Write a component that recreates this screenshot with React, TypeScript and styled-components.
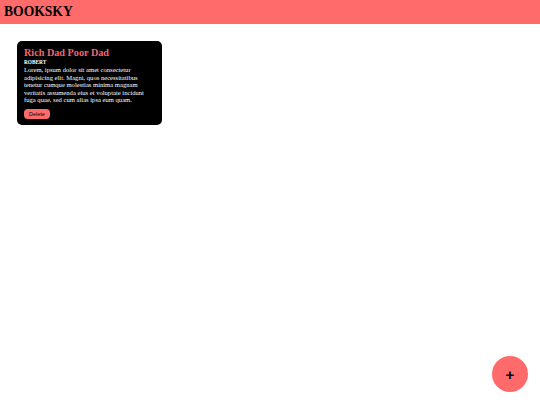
import React from "react";
import styled, { createGlobalStyle } from "styled-components";

const GlobalStyle = createGlobalStyle`
  body {
    margin: 0;
    background: #fff;
    font-family: "Liberation Serif", serif;
  }
`;

type Book = { title: string; author: string; description: string };

const books: Book[] = [
  {
    title: "Rich Dad Poor Dad",
    author: "Robert",
    description:
      "Lorem, ipsum dolor sit amet consectetur adipisicing elit. Magni, quos necessitatibus tenetur cumque molestias minima magnam veritatis assumenda eius et voluptate incidunt fuga quae, sed cum alias ipsa eum quam.",
  },
];

export default function App() {
  return (
    <>
      <GlobalStyle />
      <Header>
        <Logo>BOOKSKY</Logo>
      </Header>
      <Grid>
        {books.map((b) => (
          <Card key={b.title}>
            <Title>{b.title}</Title>
            <Author>{b.author}</Author>
            <Desc>{b.description}</Desc>
            <DeleteButton>Delete</DeleteButton>
          </Card>
        ))}
      </Grid>
      <Fab aria-label="add">+</Fab>
    </>
  );
}

const Header = styled.header`
  height: 24px;
  background: #ff6b6b;
  display: flex;
  align-items: center;
  padding: 0 4px;
`;
const Logo = styled.h1`
  margin: 0;
  font-size: 13.6px;
  font-weight: 700;
  color: #000;
`;
const Grid = styled.main`
  display: flex;
  flex-wrap: wrap;
  gap: 12px;
  padding: 17px 17px;
`;
const Card = styled.div`
  width: 131px;
  background: #000;
  color: #fff;
  border-radius: 5px;
  padding: 5px 7px 6px;
  display: flex;
  flex-direction: column;
  align-items: flex-start;
`;
const Title = styled.h2`
  margin: 0;
  font-size: 10.2px;
  line-height: 13px;
  color: #f2666a;
  font-weight: 700;
`;
const Author = styled.h4`
  margin: 0;
  font-size: 5.3px;
  line-height: 7px;
  text-transform: uppercase;
  font-weight: 700;
`;
const Desc = styled.p`
  margin: 0;
  font-size: 6.6px;
  line-height: 7.6px;
`;
const DeleteButton = styled.button`
  margin-top: 5px;
  border: none;
  background: #ff6b6b;
  color: #000;
  font-family: "Liberation Sans", Arial, sans-serif;
  font-size: 5.5px;
  padding: 0 5px;
  height: 10px;
  border-radius: 4px;
`;
const Fab = styled.button`
  position: fixed;
  right: 12px;
  bottom: 13px;
  width: 36px;
  height: 36px;
  border-radius: 50%;
  border: none;
  background: #ff6b6b;
  color: #000;
  font-family: "Liberation Sans", Arial, sans-serif;
  font-size: 15px;
  font-weight: 700;
  display: flex;
  align-items: center;
  justify-content: center;
  padding: 0;
`;
